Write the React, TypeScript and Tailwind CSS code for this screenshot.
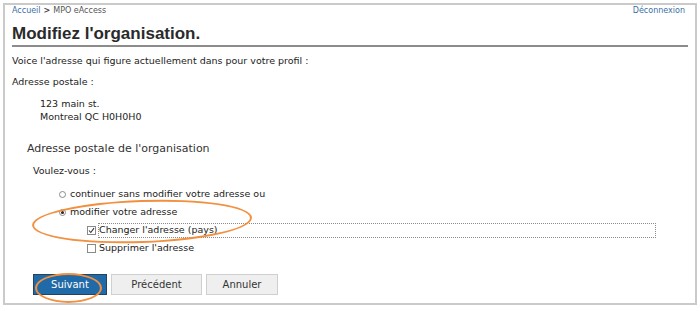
import React from 'react';

const Radio: React.FC<{ checked?: boolean }> = ({ checked }) => (
  <span className="flex h-[7px] w-[7px] items-center justify-center rounded-full border border-[#8a8a8a] bg-white">
    {checked && <span className="h-[3px] w-[3px] rounded-full bg-[#222]" />}
  </span>
);

const Checkbox: React.FC<{ checked?: boolean }> = ({ checked }) => (
  <span className="flex h-[9px] w-[9px] items-center justify-center border border-[#8a8a8a] bg-white">
    {checked && (
      <svg width="7" height="7" viewBox="0 0 7 7">
        <path d="M1 3.5 L2.8 5.5 L6 1.2" fill="none" stroke="#333" strokeWidth="1.1" />
      </svg>
    )}
  </span>
);

const App: React.FC = () => {
  return (
    <div className="h-[311px] w-[700px] bg-white p-[3px] font-['DejaVu_Sans',Verdana,sans-serif] text-[#222]">
      <div className="relative h-[302px] border-2 border-[#cacaca] bg-white px-[7px]">
        {/* breadcrumb */}
        <div className="flex justify-between pr-[3px] pt-[1px] text-[8px] leading-[10px]">
          <div>
            <span className="text-[#3b6ea5]">Accueil</span>
            <span className="mx-[3px] font-bold text-[#444]">&gt;</span>
            <span className="text-[#555]">MPO eAccess</span>
          </div>
          <span className="text-[#3b6ea5]">Déconnexion</span>
        </div>

        <h1 className="mt-[8px] font-['Liberation_Sans',Arial,sans-serif] text-[17px] font-bold leading-[20px] text-[#2a2a2a]">
          Modifiez l'organisation.
        </h1>
        <div className="mt-[1px] h-[2px] bg-[#8c8c8c]" />

        <div className="text-[9.5px] leading-[14px]">
          <p className="mt-[7px]">Voice l'adresse qui figure actuellement dans pour votre profil :</p>
          <p className="mt-[7px]">Adresse postale :</p>
          <div className="mt-[8px] pl-[28px] leading-[13px]">
            <p>123 main st.</p>
            <p>Montreal QC H0H0H0</p>
          </div>

          <h2 className="ml-[15px] mt-[18px] text-[11px] leading-[16px] text-[#333]">
            Adresse postale de l'organisation
          </h2>
          <p className="ml-[21px] mt-[7px]">Voulez-vous :</p>

          <div className="mt-[7px]">
            <label className="ml-[47px] flex h-[18px] items-center gap-[4px]">
              <Radio />
              <span>continuer sans modifier votre adresse ou</span>
            </label>
            <label className="ml-[47px] flex h-[18px] items-center gap-[4px]">
              <Radio checked />
              <span>modifier votre adresse</span>
            </label>
            <label className="ml-[75px] flex h-[18px] items-center gap-[2px]">
              <Checkbox checked />
              <span className="flex h-[15px] w-[558px] items-center border border-dotted border-[#8a8a8a]">
                Changer l'adresse (pays)
              </span>
            </label>
            <label className="ml-[75px] flex h-[18px] items-center gap-[2px]">
              <Checkbox />
              <span className="px-[1px]">Supprimer l'adresse</span>
            </label>
          </div>

          <div className="ml-[21px] mt-[17px] flex gap-[4px] text-[10px]">
            <button className="h-[21px] w-[74px] border border-[#26425e] bg-[#1f6aa7] text-white">
              Suivant
            </button>
            <button className="h-[21px] w-[91px] border border-[#cfcfcf] bg-[#efefef] text-[#333]">
              Précédent
            </button>
            <button className="h-[21px] w-[72px] border border-[#cfcfcf] bg-[#efefef] text-[#333]">
              Annuler
            </button>
          </div>
        </div>

        {/* annotation ellipses */}
        <div className="pointer-events-none absolute left-[27px] top-[195px] h-[43px] w-[220px] -rotate-[2deg] rounded-[50%] border-2 border-[#f2903f]" />
        <div className="pointer-events-none absolute left-[30px] top-[268px] h-[30px] w-[67px] rounded-[50%] border-2 border-[#f2903f]" />
      </div>
    </div>
  );
};

export default App;
